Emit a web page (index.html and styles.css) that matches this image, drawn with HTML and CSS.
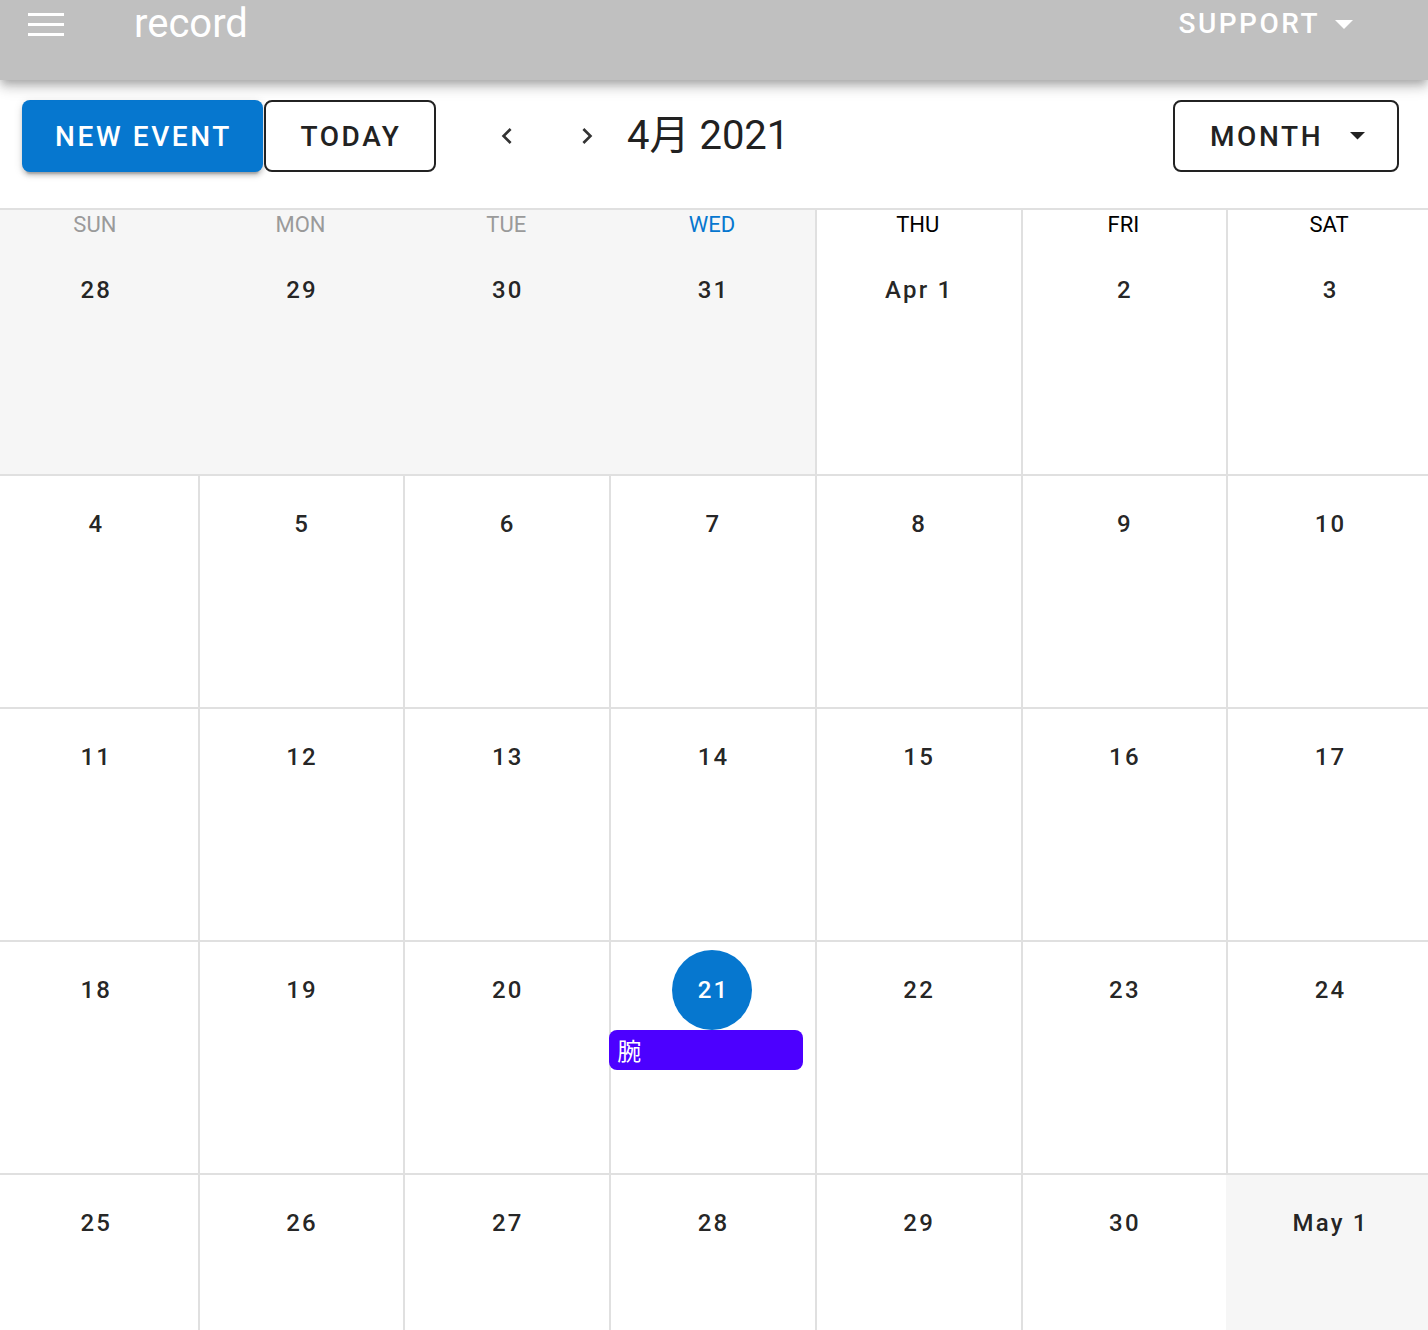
FILE: index.html
```html
<!DOCTYPE html>
<html lang="ja">
<head>
<meta charset="utf-8">
<title>record</title>
<link rel="stylesheet" href="styles.css">
</head>
<body>
<header class="appbar">
  <div class="appbar-row">
    <button class="nav-icon" aria-label="menu">
      <svg width="36" height="23" viewBox="0 0 36 23"><rect x="0" y="0" width="36" height="3" fill="#fff"/><rect x="0" y="10" width="36" height="3" fill="#fff"/><rect x="0" y="20" width="36" height="3" fill="#fff"/></svg>
    </button>
    <div class="app-title">record</div>
    <div class="spacer"></div>
    <button class="support">SUPPORT<svg class="support-caret" width="18" height="9" viewBox="0 0 18 9"><path d="M0 0H18L9 9Z" fill="#fff"/></svg></button>
  </div>
</header>

<div class="toolbar">
  <button class="btn btn-primary">NEW EVENT</button>
  <button class="btn btn-outlined btn-today">TODAY</button>
  <button class="icon-btn icon-prev" aria-label="prev">
    <svg width="32" height="32" viewBox="0 0 24 24"><path d="M15.41,16.58L10.83,12L15.41,7.41L14,6L8,12L14,18L15.41,16.58Z" fill="#333"/></svg>
  </button>
  <button class="icon-btn icon-next" aria-label="next">
    <svg width="32" height="32" viewBox="0 0 24 24"><path d="M8.59,16.58L13.17,12L8.59,7.41L10,6L16,12L10,18L8.59,16.58Z" fill="#333"/></svg>
  </button>
  <div class="cal-title">4月 2021</div>
  <div class="spacer"></div>
  <button class="btn btn-outlined btn-month"><span>MONTH</span><svg class="month-caret" width="15" height="8" viewBox="0 0 15 8"><path d="M0 0H15L7.5 7.5Z" fill="#222"/></svg></button>
</div>

<div class="calendar">
  <div class="cal-head">
    <div class="wd outside past">SUN</div>
    <div class="wd outside past">MON</div>
    <div class="wd outside past">TUE</div>
    <div class="wd outside present">WED</div>
    <div class="wd">THU</div>
    <div class="wd">FRI</div>
    <div class="wd">SAT</div>
  </div>
  <div class="week">
    <div class="day outside"><div class="day-label">28</div></div>
    <div class="day outside"><div class="day-label">29</div></div>
    <div class="day outside"><div class="day-label">30</div></div>
    <div class="day outside"><div class="day-label">31</div></div>
    <div class="day"><div class="day-label">Apr 1</div></div>
    <div class="day"><div class="day-label">2</div></div>
    <div class="day"><div class="day-label">3</div></div>
  </div>
  <div class="week">
    <div class="day"><div class="day-label">4</div></div>
    <div class="day"><div class="day-label">5</div></div>
    <div class="day"><div class="day-label">6</div></div>
    <div class="day"><div class="day-label">7</div></div>
    <div class="day"><div class="day-label">8</div></div>
    <div class="day"><div class="day-label">9</div></div>
    <div class="day"><div class="day-label">10</div></div>
  </div>
  <div class="week">
    <div class="day"><div class="day-label">11</div></div>
    <div class="day"><div class="day-label">12</div></div>
    <div class="day"><div class="day-label">13</div></div>
    <div class="day"><div class="day-label">14</div></div>
    <div class="day"><div class="day-label">15</div></div>
    <div class="day"><div class="day-label">16</div></div>
    <div class="day"><div class="day-label">17</div></div>
  </div>
  <div class="week">
    <div class="day"><div class="day-label">18</div></div>
    <div class="day"><div class="day-label">19</div></div>
    <div class="day"><div class="day-label">20</div></div>
    <div class="day"><div class="day-label today">21</div><div class="event">腕</div></div>
    <div class="day"><div class="day-label">22</div></div>
    <div class="day"><div class="day-label">23</div></div>
    <div class="day"><div class="day-label">24</div></div>
  </div>
  <div class="week">
    <div class="day"><div class="day-label">25</div></div>
    <div class="day"><div class="day-label">26</div></div>
    <div class="day"><div class="day-label">27</div></div>
    <div class="day"><div class="day-label">28</div></div>
    <div class="day"><div class="day-label">29</div></div>
    <div class="day"><div class="day-label">30</div></div>
    <div class="day outside"><div class="day-label">May 1</div></div>
  </div>
</div>
</body>
</html>
```

FILE: styles.css
```css
* { box-sizing: border-box; }

html, body {
  margin: 0;
  padding: 0;
  background: #fff;
  overflow: hidden;
}

body {
  font-family: Roboto, "Noto Sans CJK SC", sans-serif;
  color: rgba(0, 0, 0, 0.87);
  width: 1428px;
}

button {
  font-family: inherit;
  background: none;
  border: none;
  padding: 0;
  margin: 0;
  cursor: pointer;
}

.spacer { flex: 1 1 auto; }

/* ---------- App bar ---------- */
.appbar {
  position: relative;
  z-index: 2;
  height: 80px;
  background: #c0c0c0;
  box-shadow: 0 4px 8px -2px rgba(0,0,0,0.2), 0 8px 10px 0 rgba(0,0,0,0.14), 0 2px 20px 0 rgba(0,0,0,0.12);
}

.appbar-row {
  height: 48px;
  display: flex;
  align-items: center;
  padding-left: 28px;
  padding-right: 75px;
}

.nav-icon {
  width: 36px;
  height: 23px;
  display: flex;
}

.app-title {
  margin-left: 70px;
  font-size: 40px;
  font-weight: 400;
  color: #fff;
  line-height: 48px;
  margin-top: -1px;
}

.support {
  display: flex;
  align-items: center;
  color: #fff;
  font-size: 28px;
  font-weight: 500;
  letter-spacing: 2.5px;
  line-height: 48px;
}

.support-caret { margin-left: 15px; }

/* ---------- Toolbar ---------- */
.toolbar {
  display: flex;
  align-items: center;
  padding: 20px 30px 36px 22px;
  height: 128px;
}

.btn {
  height: 72px;
  border-radius: 8px;
  font-size: 28px;
  font-weight: 500;
  letter-spacing: 2.6px;
  display: flex;
  align-items: center;
  justify-content: center;
  padding: 0 30px 0 32px;
}

.btn-primary {
  width: 241px;
  background: #0677cf;
  color: #fff;
  box-shadow: 0 6px 2px -4px rgba(0,0,0,0.2), 0 4px 4px 0 rgba(0,0,0,0.14), 0 2px 10px 0 rgba(0,0,0,0.12);
}

.btn-outlined {
  border: 2px solid #222;
  color: #222;
  background: #fff;
}

.btn-today {
  width: 172px;
  margin-left: 1px;
}

.icon-btn {
  width: 80px;
  height: 72px;
  display: flex;
  align-items: center;
  justify-content: center;
}

.icon-prev { margin-left: 31px; }

.cal-title {
  font-size: 40px;
  font-weight: 400;
  color: #212121;
  line-height: 72px;
  margin-left: 0;
}

.btn-month {
  width: 226px;
  justify-content: flex-start;
  padding: 0 0 0 35px;
  margin-right: -1px;
}

.month-caret { margin-left: 27px; }

/* ---------- Calendar ---------- */
.calendar {
  width: 1440px;
  margin-left: -8px;
  border-top: 2px solid #e0e0e0;
}

.cal-head,
.week {
  display: grid;
  grid-template-columns: repeat(7, 1fr);
}

.wd {
  height: 32px;
  line-height: 30px;
  font-size: 22px;
  text-align: center;
  color: #000;
  border-left: 2px solid #e0e0e0;
  background: #fff;
  padding-right: 2px;
}

.wd.outside {
  background: #f6f6f6;
  border-left-color: #f6f6f6;
}

.wd.past { color: #9a9a9a; }
.wd.present { color: #0677cf; }

.week {
  height: 232px;
}

.week + .week {
  height: 233px;
  border-top: 2px solid #e0e0e0;
}

.day {
  border-left: 2px solid #e0e0e0;
  background: #fff;
  display: flex;
  flex-direction: column;
  align-items: center;
  min-width: 0;
  padding-right: 1px;
}

.day.outside {
  background: #f6f6f6;
  border-left-color: #f6f6f6;
}

.day-label {
  margin-top: 8px;
  min-width: 80px;
  height: 80px;
  border-radius: 40px;
  display: flex;
  align-items: center;
  justify-content: center;
  font-size: 24px;
  font-weight: 500;
  letter-spacing: 2.2px;
  padding-left: 2px;
  color: rgba(0, 0, 0, 0.87);
  white-space: nowrap;
}

.day-label.today {
  background: #0677cf;
  color: #fff;
}

.event {
  align-self: flex-start;
  margin-left: -2px;
  width: 194px;
  height: 40px;
  border-radius: 8px;
  background: #4c00ff;
  color: #fff;
  font-size: 24px;
  line-height: 40px;
  padding-left: 8px;
  font-family: "Noto Sans CJK SC", sans-serif;
}
```
